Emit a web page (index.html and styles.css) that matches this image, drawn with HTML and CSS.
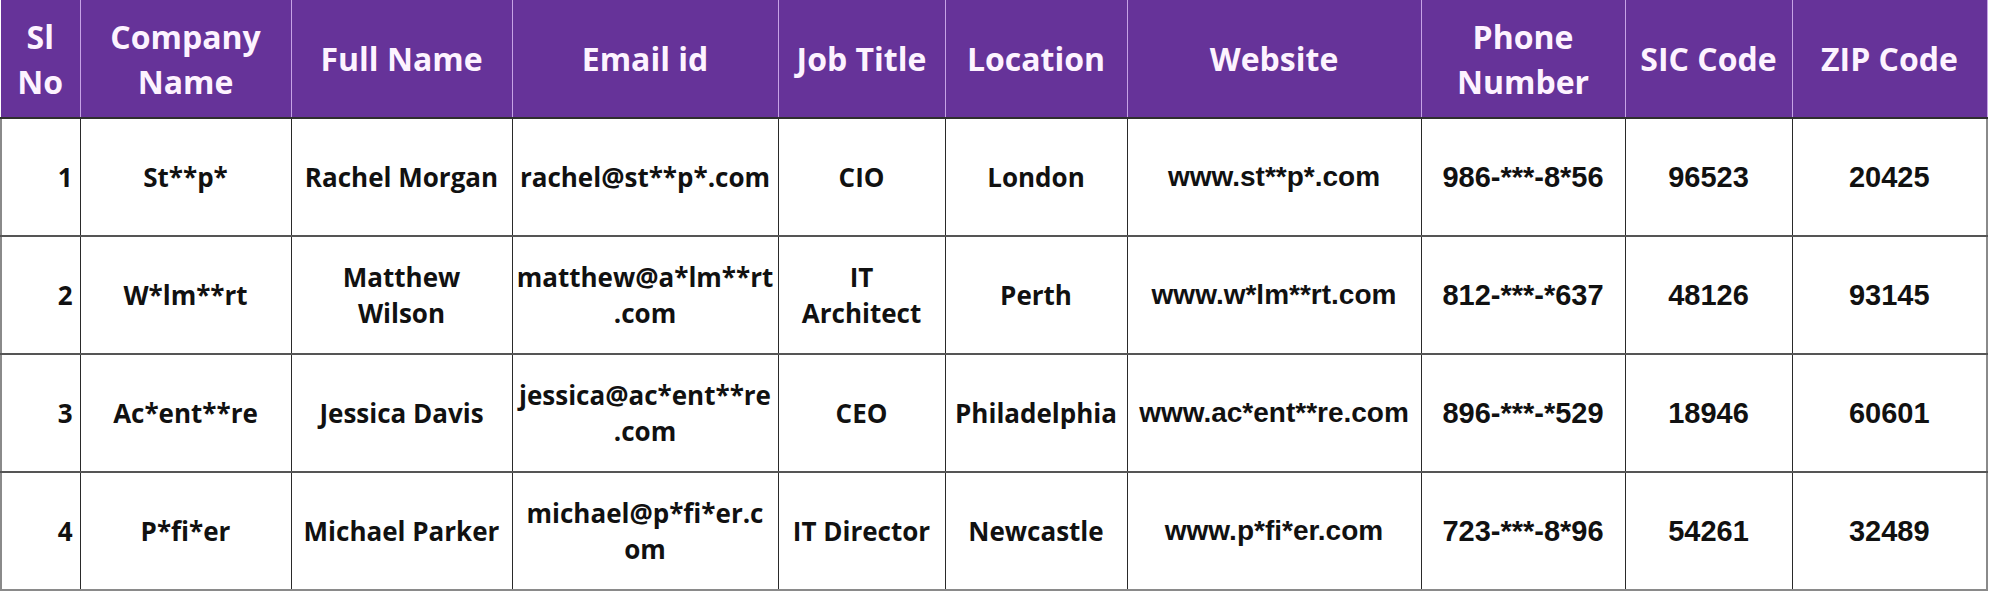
FILE: index.html
```html
<!DOCTYPE html>
<html lang="en">
<head>
<meta charset="utf-8">
<title>Contacts</title>
<link rel="stylesheet" href="styles.css">
</head>
<body>
<table class="data-table">
  <colgroup>
    <col class="c-sl"><col class="c-company"><col class="c-name"><col class="c-email"><col class="c-job">
    <col class="c-loc"><col class="c-web"><col class="c-phone"><col class="c-sic"><col class="c-zip">
  </colgroup>
  <thead>
    <tr>
      <th>Sl<br>No</th>
      <th>Company<br>Name</th>
      <th>Full Name</th>
      <th>Email id</th>
      <th>Job Title</th>
      <th>Location</th>
      <th>Website</th>
      <th>Phone<br>Number</th>
      <th>SIC Code</th>
      <th>ZIP Code</th>
    </tr>
  </thead>
  <tbody>
    <tr>
      <td class="num">1</td>
      <td>St**p*</td>
      <td>Rachel Morgan</td>
      <td class="email">rachel@st**p*.com</td>
      <td>CIO</td>
      <td>London</td>
      <td class="web">www.st**p*.com</td>
      <td class="digits">986-***-8*56</td>
      <td class="digits">96523</td>
      <td class="digits">20425</td>
    </tr>
    <tr>
      <td class="num">2</td>
      <td>W*lm**rt</td>
      <td>Matthew<br>Wilson</td>
      <td class="email">matthew@a*lm**rt<wbr>.com</td>
      <td>IT<br>Architect</td>
      <td>Perth</td>
      <td class="web">www.w*lm**rt.com</td>
      <td class="digits">812-***-*637</td>
      <td class="digits">48126</td>
      <td class="digits">93145</td>
    </tr>
    <tr>
      <td class="num">3</td>
      <td>Ac*ent**re</td>
      <td>Jessica Davis</td>
      <td class="email">jessica@ac*ent**re<wbr>.com</td>
      <td>CEO</td>
      <td>Philadelphia</td>
      <td class="web">www.ac*ent**re.com</td>
      <td class="digits">896-***-*529</td>
      <td class="digits">18946</td>
      <td class="digits">60601</td>
    </tr>
    <tr>
      <td class="num">4</td>
      <td>P*fi*er</td>
      <td>Michael Parker</td>
      <td class="email">michael@p*fi*er.c<wbr>om</td>
      <td>IT Director</td>
      <td>Newcastle</td>
      <td class="web">www.p*fi*er.com</td>
      <td class="digits">723-***-8*96</td>
      <td class="digits">54261</td>
      <td class="digits">32489</td>
    </tr>
  </tbody>
</table>
</body>
</html>
```
FILE: styles.css
```css
html, body {
  margin: 0;
  padding: 0;
  background: #ffffff;
}

.data-table {
  border-collapse: collapse;
  table-layout: fixed;
  width: 1986px;
  font-family: "Open Sans", "Liberation Sans", sans-serif;
  font-weight: 700;
  color: #111111;
}

.c-sl { width: 79px; }
.c-company { width: 211px; }
.c-name { width: 221px; }
.c-email { width: 266px; }
.c-job { width: 167px; }
.c-loc { width: 182px; }
.c-web { width: 294px; }
.c-phone { width: 204px; }
.c-sic { width: 167px; }
.c-zip { width: 195px; }

.data-table th {
  height: 117px;
  padding: 0 2px;
  background: #663399;
  color: #fdf3ff;
  font-size: 32px;
  line-height: 45px;
  font-weight: 700;
  text-align: center;
  vertical-align: middle;
  border-left: 1px solid #c7a3e6;
  border-right: 1px solid #c7a3e6;
  border-bottom: 2px solid #2f2f2f;
  border-top: 0;
}

.data-table th:first-child {
  border-left: 0;
}

.data-table td {
  height: 116px;
  padding: 0 4px;
  font-size: 26px;
  line-height: 36px;
  text-align: center;
  vertical-align: middle;
  border: 1px solid #2a2a2a;
  border-top: 2px solid #555555;
  border-bottom: 2px solid #555555;
}

.data-table td:first-child {
  border-left: 2px solid #8a8a8a;
}

.data-table td:last-child {
  border-right: 2px solid #8a8a8a;
}

.data-table tbody tr:last-child td {
  border-bottom: 2px solid #8a8a8a;
}

.data-table td.num {
  text-align: right;
  padding-right: 7px;
}

.data-table td.email {
  padding: 0 2px;
  overflow-wrap: anywhere;
}

.data-table td.web {
  font-family: "Liberation Sans", "Open Sans", sans-serif;
  font-size: 28px;
}

.data-table td.digits {
  font-family: "Liberation Sans", "Open Sans", sans-serif;
  font-size: 29px;
}
```
